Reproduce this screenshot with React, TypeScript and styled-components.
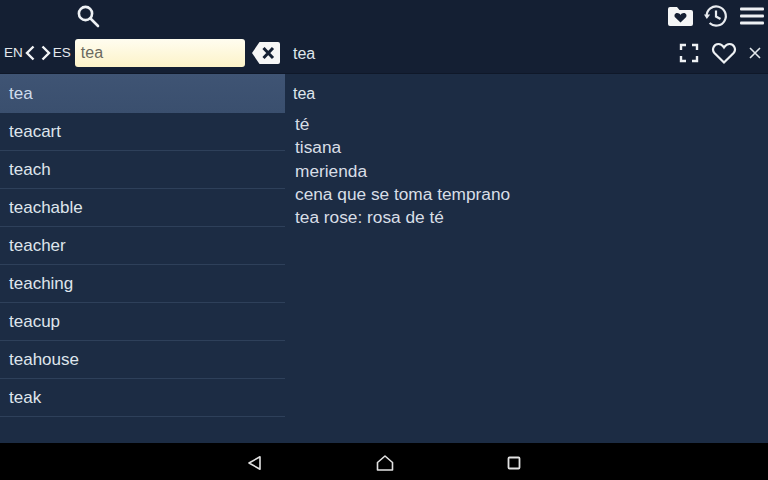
import styled, { createGlobalStyle } from 'styled-components';

const GlobalStyle = createGlobalStyle`
  html,
  body {
    margin: 0;
    padding: 0;
    background: #1c2c44;
  }
`;

const Screen = styled.div`
  width: 768px;
  height: 480px;
  display: flex;
  flex-direction: column;
  overflow: hidden;
  font-family: 'Liberation Sans', Arial, sans-serif;
  color: #dfe5ec;
`;

const Header = styled.header`
  height: 73px;
  flex: none;
  display: flex;
  flex-direction: column;
  background: #141f33;
  border-bottom: 1px solid #0f1829;
`;

const TopRow = styled.div`
  height: 32px;
  display: flex;
  align-items: center;
  justify-content: space-between;
  padding: 0 4px 0 76px;
`;

const TopIcons = styled.div`
  display: flex;
  align-items: center;
  gap: 10px;
`;

const SearchRow = styled.div`
  height: 41px;
  display: flex;
  align-items: center;
`;

const SearchPane = styled.div`
  width: 285px;
  flex: none;
  display: flex;
  align-items: center;
  padding-left: 4px;
  box-sizing: border-box;
`;

const Lang = styled.span`
  font-size: 13.5px;
  color: #e4e8ee;
`;

const Arrows = styled.div`
  display: flex;
  gap: 4px;
  margin: 0 2px;
`;

const Input = styled.div`
  width: 170px;
  height: 28px;
  margin-left: 4px;
  box-sizing: border-box;
  padding: 0 6px;
  display: flex;
  align-items: center;
  font-size: 16px;
  color: #6b6a60;
  background: linear-gradient(#fffdf0, #fdf3c8);
  border-radius: 3px;
`;

const ClearButton = styled.div`
  display: flex;
  margin-left: 6px;
`;

const TitlePane = styled.div`
  flex: 1;
  display: flex;
  align-items: center;
  justify-content: space-between;
  padding: 0 7px 0 8px;
  font-size: 16px;
`;

const TitleWord = styled.span`
  padding-top: 2px;
`;

const TitleIcons = styled.div`
  display: flex;
  align-items: center;
  gap: 12px;
`;

const Body = styled.main`
  flex: 1;
  display: flex;
  min-height: 0;
`;

const WordList = styled.ul`
  width: 285px;
  flex: none;
  margin: 0;
  padding: 0;
  list-style: none;
`;

const Word = styled.li<{ $active?: boolean }>`
  height: ${(p) => (p.$active ? '39px' : '38px')};
  box-sizing: border-box;
  display: flex;
  align-items: center;
  padding-left: 9px;
  font-size: 17px;
  color: ${(p) => (p.$active ? '#cfdcec' : '#dfe5ec')};
  background: ${(p) => (p.$active ? 'linear-gradient(#3f5474, #3a4f6e)' : 'none')};
  border-bottom: ${(p) => (p.$active ? 'none' : '1px solid #2e405a')};
`;

const Entry = styled.article`
  flex: 1;
  padding-left: 8px;
`;

const EntryTitle = styled.h2`
  height: 39px;
  margin: 0;
  display: flex;
  align-items: center;
  font-size: 16px;
  font-weight: normal;
`;

const Meanings = styled.div`
  padding-left: 2px;
  font-size: 17.3px;
  line-height: 23.25px;
  color: #d8dee6;
`;

const NavBar = styled.nav`
  height: 37px;
  flex: none;
  background: #000;
  display: flex;
  align-items: center;
  justify-content: center;
  gap: 113px;
  padding-top: 2px;
  box-sizing: border-box;
`;

const words = ['teacart', 'teach', 'teachable', 'teacher', 'teaching', 'teacup', 'teahouse', 'teak'];
const meanings = ['té', 'tisana', 'merienda', 'cena que se toma temprano', 'tea rose: rosa de té'];

const SearchIcon = () => (
  <svg width="24" height="24" viewBox="0 0 24 24" fill="none" stroke="#eef1f5" strokeWidth="2.6">
    <circle cx="9.5" cy="9.5" r="6.6" />
    <path d="M14.5 14.5 22 22" strokeLinecap="round" />
  </svg>
);

const FolderHeartIcon = () => (
  <svg width="26" height="20" viewBox="1 0 26 20">
    <path d="M1 3a2 2 0 0 1 2-2h7l2.5 3H24a2 2 0 0 1 2 2v12a2 2 0 0 1-2 2H3a2 2 0 0 1-2-2z" fill="#f4f5f6" />
    <path
      d="M13.5 16.5 8.3 11.6C6.6 9.8 7.8 7 10.2 7c1.4 0 2.5.7 3.3 1.9C14.3 7.700 15.400 7 16.800 7c2.400 0 3.600 2.800 1.900 4.600z"
      fill="#141f33"
    />
  </svg>
);

const HistoryIcon = () => (
  <svg width="26" height="24" viewBox="2 0 26 24" fill="none" stroke="#e8ebef" strokeWidth="2.2">
    <path d="M4.600 12a9.600 9.600 0 1 1 3 7" />
    <path d="M2 10.500h6.200L4.800 15z" fill="#e8ebef" stroke="none" />
    <path d="M14 6.500V12.500l4.500 2.500" />
  </svg>
);

const MenuIcon = () => (
  <svg width="24" height="20" viewBox="0 0 24 20" fill="#eef0f3">
    <rect y="1.500" width="24" height="3" rx="1" />
    <rect y="8.500" width="24" height="3" rx="1" />
    <rect y="15.500" width="24" height="3" rx="1" />
  </svg>
);

const Chevron = ({ flip }: { flip?: boolean }) => (
  <svg width="11" height="16" viewBox="0 0 11 16" fill="none" stroke="#f2f4f6" strokeWidth="2.4">
    <path d={flip ? 'M2.500 1.500 9 8l-6.500 6.500' : 'M8.500 1.500 2 8l6.500 6.500'} />
  </svg>
);

const ClearIcon = () => (
  <svg width="30" height="24" viewBox="0 0 30 24">
    <path d="M8.500 1H27a2 2 0 0 1 2 2v18a2 2 0 0 1-2 2H8.500L1 12z" fill="#f6f6f6" />
    <path d="M12.500 7 22 17M22 7l-9.500 10" stroke="#141f33" strokeWidth="3" />
  </svg>
);

const FullscreenIcon = () => (
  <svg width="20" height="20" viewBox="0 0 20 20" fill="none" stroke="#eef1f4" strokeWidth="2.400">
    <path d="M2 7V2h5M13 2h5v5M18 13v5h-5M7 18H2v-5" />
  </svg>
);

const HeartIcon = () => (
  <svg width="26" height="24" viewBox="0 0 26 24" fill="none" stroke="#eef1f4" strokeWidth="2.200">
    <path d="M13 21.500 3.400 12C.500 8.800 2.500 3 7.400 3c2.400 0 4.200 1.300 5.600 3.400C14.400 4.300 16.200 3 18.600 3c4.900 0 6.900 5.800 4 9z" />
  </svg>
);

const CloseIcon = () => (
  <svg width="12" height="12" viewBox="0 0 12 12" stroke="#e4e8ec" strokeWidth="1.600">
    <path d="M1 1l10 10M11 1 1 11" />
  </svg>
);

const BackIcon = () => (
  <svg width="16" height="16" viewBox="0 0 16 16" fill="none" stroke="#e2e2e2" strokeWidth="1.600" strokeLinejoin="round">
    <path d="M13 1.800v12.400L2 8z" />
  </svg>
);

const HomeIcon = () => (
  <svg width="18" height="16" viewBox="0 0 18 16" fill="none" stroke="#e2e2e2" strokeWidth="1.600" strokeLinejoin="round">
    <path d="M9 1 1.500 7.500v7.500h15V7.500z" />
  </svg>
);

const SquareIcon = () => (
  <svg width="14" height="14" viewBox="0 0 14 14" fill="none" stroke="#e2e2e2" strokeWidth="1.800">
    <rect x="1.500" y="1.500" width="11" height="11" rx="1" />
  </svg>
);

const App = () => {
  return (
    <Screen>
      <GlobalStyle />
      <Header>
        <TopRow>
          <SearchIcon />
          <TopIcons>
            <FolderHeartIcon />
            <HistoryIcon />
            <MenuIcon />
          </TopIcons>
        </TopRow>
        <SearchRow>
          <SearchPane>
            <Lang>EN</Lang>
            <Arrows>
              <Chevron />
              <Chevron flip />
            </Arrows>
            <Lang>ES</Lang>
            <Input>tea</Input>
            <ClearButton>
              <ClearIcon />
            </ClearButton>
          </SearchPane>
          <TitlePane>
            <TitleWord>tea</TitleWord>
            <TitleIcons>
              <FullscreenIcon />
              <HeartIcon />
              <CloseIcon />
            </TitleIcons>
          </TitlePane>
        </SearchRow>
      </Header>
      <Body>
        <WordList>
          <Word $active>tea</Word>
          {words.map((word) => (
            <Word key={word}>{word}</Word>
          ))}
        </WordList>
        <Entry>
          <EntryTitle>tea</EntryTitle>
          <Meanings>
            {meanings.map((meaning) => (
              <div key={meaning}>{meaning}</div>
            ))}
          </Meanings>
        </Entry>
      </Body>
      <NavBar>
        <BackIcon />
        <HomeIcon />
        <SquareIcon />
      </NavBar>
    </Screen>
  );
};

export default App;
